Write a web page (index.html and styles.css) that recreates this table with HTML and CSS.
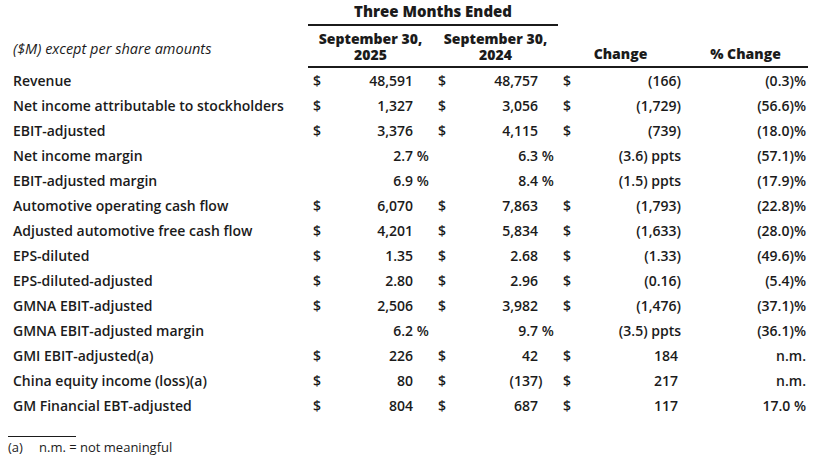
FILE: index.html
```html
<!DOCTYPE html>
<html lang="en">
<head>
<meta charset="utf-8">
<title>Three Months Ended</title>
<link rel="stylesheet" href="styles.css">
</head>
<body>
<div class="table">
  <div class="row top">
    <div class="label"></div>
    <div class="span2 title">Three Months Ended</div>
  </div>
  <div class="row head">
    <div class="label caption">($M) except per share amounts</div>
    <div class="hcell"><span class="hl">September 30,</span><span class="hl">2025</span></div>
    <div class="hcell"><span class="hl">September 30,</span><span class="hl">2024</span></div>
    <div class="hcell"><span class="hl">Change</span></div>
    <div class="hcell"><span class="hl">% Change</span></div>
  </div>

  <div class="row">
    <div class="label">Revenue</div>
    <div class="cell"><span class="cur">$</span><span class="num">48,591</span><span class="suf"></span></div>
    <div class="cell"><span class="cur">$</span><span class="num">48,757</span><span class="suf"></span></div>
    <div class="cell chg"><span class="cur">$</span><span class="num">(166</span><span class="suf">)</span></div>
    <div class="cell pct">(0.3)%</div>
  </div>
  <div class="row">
    <div class="label">Net income attributable to stockholders</div>
    <div class="cell"><span class="cur">$</span><span class="num">1,327</span><span class="suf"></span></div>
    <div class="cell"><span class="cur">$</span><span class="num">3,056</span><span class="suf"></span></div>
    <div class="cell chg"><span class="cur">$</span><span class="num">(1,729</span><span class="suf">)</span></div>
    <div class="cell pct">(56.6)%</div>
  </div>
  <div class="row">
    <div class="label">EBIT-adjusted</div>
    <div class="cell"><span class="cur">$</span><span class="num">3,376</span><span class="suf"></span></div>
    <div class="cell"><span class="cur">$</span><span class="num">4,115</span><span class="suf"></span></div>
    <div class="cell chg"><span class="cur">$</span><span class="num">(739</span><span class="suf">)</span></div>
    <div class="cell pct">(18.0)%</div>
  </div>
  <div class="row">
    <div class="label">Net income margin</div>
    <div class="cell"><span class="cur"></span><span class="num">2.7</span><span class="suf">&nbsp;%</span></div>
    <div class="cell"><span class="cur"></span><span class="num">6.3</span><span class="suf">&nbsp;%</span></div>
    <div class="cell chg"><span class="cur"></span><span class="num">(3.6</span><span class="suf">) ppts</span></div>
    <div class="cell pct">(57.1)%</div>
  </div>
  <div class="row">
    <div class="label">EBIT-adjusted margin</div>
    <div class="cell"><span class="cur"></span><span class="num">6.9</span><span class="suf">&nbsp;%</span></div>
    <div class="cell"><span class="cur"></span><span class="num">8.4</span><span class="suf">&nbsp;%</span></div>
    <div class="cell chg"><span class="cur"></span><span class="num">(1.5</span><span class="suf">) ppts</span></div>
    <div class="cell pct">(17.9)%</div>
  </div>
  <div class="row">
    <div class="label">Automotive operating cash flow</div>
    <div class="cell"><span class="cur">$</span><span class="num">6,070</span><span class="suf"></span></div>
    <div class="cell"><span class="cur">$</span><span class="num">7,863</span><span class="suf"></span></div>
    <div class="cell chg"><span class="cur">$</span><span class="num">(1,793</span><span class="suf">)</span></div>
    <div class="cell pct">(22.8)%</div>
  </div>
  <div class="row">
    <div class="label">Adjusted automotive free cash flow</div>
    <div class="cell"><span class="cur">$</span><span class="num">4,201</span><span class="suf"></span></div>
    <div class="cell"><span class="cur">$</span><span class="num">5,834</span><span class="suf"></span></div>
    <div class="cell chg"><span class="cur">$</span><span class="num">(1,633</span><span class="suf">)</span></div>
    <div class="cell pct">(28.0)%</div>
  </div>
  <div class="row">
    <div class="label">EPS-diluted</div>
    <div class="cell"><span class="cur">$</span><span class="num">1.35</span><span class="suf"></span></div>
    <div class="cell"><span class="cur">$</span><span class="num">2.68</span><span class="suf"></span></div>
    <div class="cell chg"><span class="cur">$</span><span class="num">(1.33</span><span class="suf">)</span></div>
    <div class="cell pct">(49.6)%</div>
  </div>
  <div class="row">
    <div class="label">EPS-diluted-adjusted</div>
    <div class="cell"><span class="cur">$</span><span class="num">2.80</span><span class="suf"></span></div>
    <div class="cell"><span class="cur">$</span><span class="num">2.96</span><span class="suf"></span></div>
    <div class="cell chg"><span class="cur">$</span><span class="num">(0.16</span><span class="suf">)</span></div>
    <div class="cell pct">(5.4)%</div>
  </div>
  <div class="row">
    <div class="label">GMNA EBIT-adjusted</div>
    <div class="cell"><span class="cur">$</span><span class="num">2,506</span><span class="suf"></span></div>
    <div class="cell"><span class="cur">$</span><span class="num">3,982</span><span class="suf"></span></div>
    <div class="cell chg"><span class="cur">$</span><span class="num">(1,476</span><span class="suf">)</span></div>
    <div class="cell pct">(37.1)%</div>
  </div>
  <div class="row">
    <div class="label">GMNA EBIT-adjusted margin</div>
    <div class="cell"><span class="cur"></span><span class="num">6.2</span><span class="suf">&nbsp;%</span></div>
    <div class="cell"><span class="cur"></span><span class="num">9.7</span><span class="suf">&nbsp;%</span></div>
    <div class="cell chg"><span class="cur"></span><span class="num">(3.5</span><span class="suf">) ppts</span></div>
    <div class="cell pct">(36.1)%</div>
  </div>
  <div class="row">
    <div class="label">GMI EBIT-adjusted(a)</div>
    <div class="cell"><span class="cur">$</span><span class="num">226</span><span class="suf"></span></div>
    <div class="cell"><span class="cur">$</span><span class="num">42</span><span class="suf"></span></div>
    <div class="cell chg"><span class="cur">$</span><span class="num">184</span><span class="suf"></span></div>
    <div class="cell pct">n.m.</div>
  </div>
  <div class="row">
    <div class="label">China equity income (loss)(a)</div>
    <div class="cell"><span class="cur">$</span><span class="num">80</span><span class="suf"></span></div>
    <div class="cell"><span class="cur">$</span><span class="num">(137</span><span class="suf">)</span></div>
    <div class="cell chg"><span class="cur">$</span><span class="num">217</span><span class="suf"></span></div>
    <div class="cell pct">n.m.</div>
  </div>
  <div class="row">
    <div class="label">GM Financial EBT-adjusted</div>
    <div class="cell"><span class="cur">$</span><span class="num">804</span><span class="suf"></span></div>
    <div class="cell"><span class="cur">$</span><span class="num">687</span><span class="suf"></span></div>
    <div class="cell chg"><span class="cur">$</span><span class="num">117</span><span class="suf"></span></div>
    <div class="cell pct">17.0&nbsp;%</div>
  </div>
</div>

<div class="footnote">
  <div class="rule"></div>
  <p class="note"><span class="mark">(a)</span>n.m. = not meaningful</p>
</div>
</body>
</html>
```

FILE: styles.css
```css
* { box-sizing: border-box; }

html, body {
  margin: 0;
  padding: 0;
  background: #ffffff;
}

body {
  padding: 0 8px;
  font-family: "Open Sans", "Liberation Sans", sans-serif;
  font-size: 14px;
  font-weight: 600;
  color: #1b1b1b;
}

.table {
  width: 800px;
}

.row {
  display: grid;
  grid-template-columns: 300px 125px 125px 125px 125px;
  height: 25px;
  line-height: 25px;
  white-space: nowrap;
}

.label {
  padding-left: 5px;
}

.row.top {
  height: 26px;
  line-height: 22px;
}

.span2 {
  grid-column: 2 / span 2;
}

.title {
  font-weight: 800;
  font-size: 15px;
  text-align: center;
  border-bottom: 2px solid #1b1b1b;
  padding-left: 0;
}

.row.head {
  height: 42px;
  line-height: 16px;
}

.caption {
  font-style: italic;
  font-weight: 400;
  font-size: 14.5px;
  align-self: center;
  padding-top: 4px;
}

.hcell {
  font-weight: 800;
  font-size: 14px;
  text-align: center;
  border-bottom: 2px solid #1b1b1b;
  display: flex;
  flex-direction: column;
  justify-content: flex-end;
  padding-bottom: 4px;
}

.hl {
  display: block;
  height: 16px;
  line-height: 16px;
}

.hcell:nth-child(2),
.hcell:nth-child(3) {
  justify-content: flex-start;
  padding-top: 5px;
  padding-bottom: 0;
}

.cell {
  display: flex;
  padding-left: 5px;
}

.cur {
  width: 12px;
}

.num {
  flex: 1;
  text-align: right;
}

.suf {
  width: 20px;
  text-align: left;
}

.chg .suf {
  width: auto;
  min-width: 5px;
  padding-right: 2px;
}

.pct {
  justify-content: flex-end;
  padding-right: 2px;
}

.footnote {
  margin-top: 18px;
}

.rule {
  width: 68px;
  border-top: 1px solid #1b1b1b;
}

.note {
  margin: 0;
  font-size: 13px;
  font-weight: 500;
  line-height: 20px;
}

.mark {
  display: inline-block;
  width: 31px;
}
```
